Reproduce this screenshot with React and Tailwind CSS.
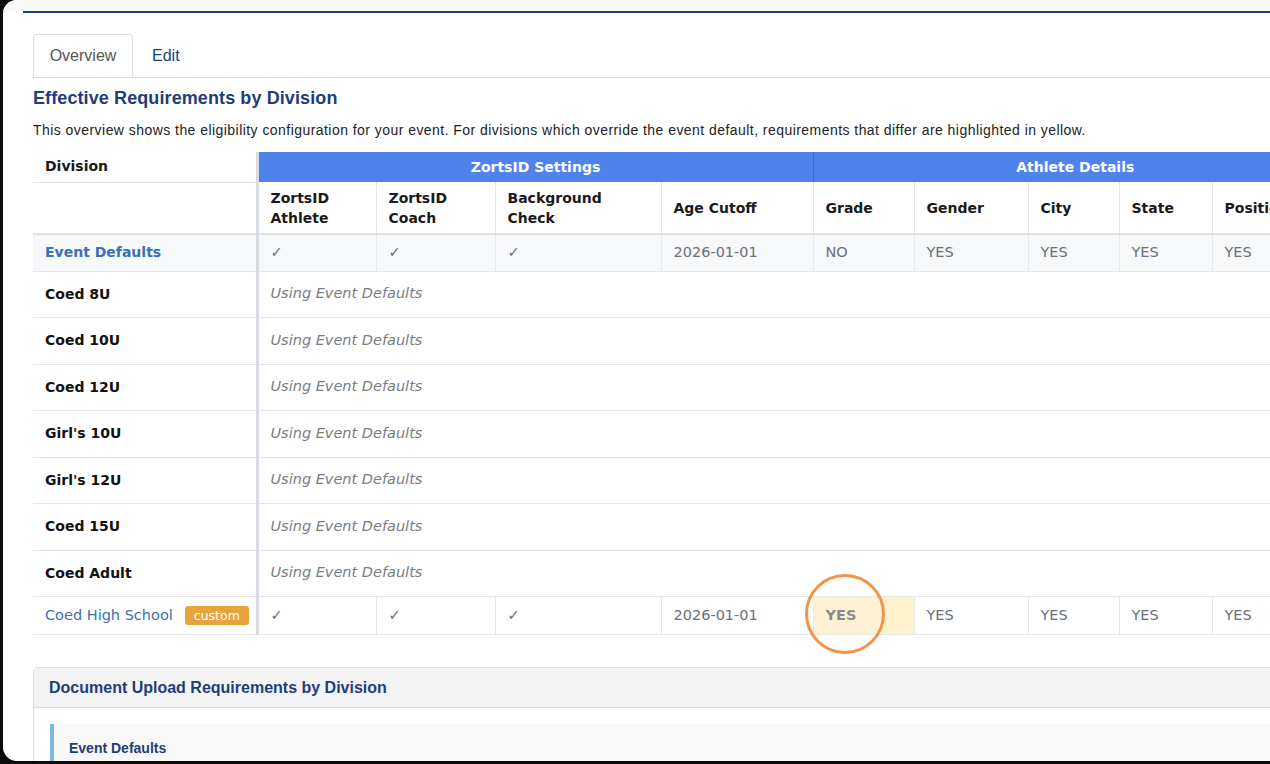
import React from 'react';

const subHeaders = [
  ['ZortsID', 'Athlete'],
  ['ZortsID', 'Coach'],
  ['Background', 'Check'],
  ['Age Cutoff'],
  ['Grade'],
  ['Gender'],
  ['City'],
  ['State'],
  ['Position'],
];

const defaultDivisions = ['Coed 8U', 'Coed 10U', 'Coed 12U', "Girl's 10U", "Girl's 12U", 'Coed 15U', 'Coed Adult'];

const values = ['✓', '✓', '✓', '2026-01-01', 'NO', 'YES', 'YES', 'YES', 'YES'];
const customValues = ['✓', '✓', '✓', '2026-01-01', 'YES', 'YES', 'YES', 'YES', 'YES'];

function ValueCell({ v, highlight, children }) {
  return (
    <td
      className={`relative border-r border-b border-[#e5e7eb] px-3 align-middle text-[14.5px] ${
        highlight ? 'bg-[#fcf2cc] font-bold text-[#6b7079]' : 'text-[#6b7079]'
      }`}
    >
      <span className="relative z-10">{v}</span>
      {children}
    </td>
  );
}

export default function App() {
  return (
    <div className="h-[764px] w-full overflow-hidden bg-[#0c0c0c] pl-[3px] pb-[3px]">
      <div className="relative h-full overflow-hidden rounded-l-[14px] bg-white" style={{ fontFamily: '"Liberation Sans", Arial, sans-serif' }}>
        <div className="h-[11px] bg-[#f9f9f9]" />
        <div className="ml-[20px] h-[2px] bg-[#1f3d7a]" />

        <div className="w-[1334px] pl-[30px]">
          {/* tabs */}
          <div className="mt-[21px] flex border-b border-[#dddddd]">
            <div className="-mb-px flex h-[43px] w-[100px] items-center justify-center rounded-t-[4px] border border-[#dddddd] border-b-white bg-white text-[16px] text-[#555555]">
              Overview
            </div>
            <div className="flex h-[43px] items-center px-[19px] text-[16px] text-[#1f3d7a]">Edit</div>
          </div>

          <h2 className="mt-[8px] text-[18px] leading-[24px] font-bold tracking-[0.1px] text-[#1f3d7a]">Effective Requirements by Division</h2>
          <p className="mt-[11px] text-[14px] leading-[18px] tracking-[0.45px] text-[#222222]">
            This overview shows the eligibility configuration for your event. For divisions which override the event default, requirements that differ are highlighted in yellow.
          </p>

          {/* requirements table */}
          <table
            className="mt-[13px] w-[1304px] table-fixed border-collapse text-[#1a1a1a]"
            style={{ fontFamily: '"DejaVu Sans", Verdana, sans-serif' }}
          >
            <colgroup>
              <col className="w-[224px]" />
              <col className="w-[119px]" />
              <col className="w-[119px]" />
              <col className="w-[166px]" />
              <col className="w-[152px]" />
              <col className="w-[101px]" />
              <col className="w-[114px]" />
              <col className="w-[91px]" />
              <col className="w-[93px]" />
              <col className="w-[125px]" />
            </colgroup>
            <thead>
              <tr className="h-[30px]">
                <th className="border-r-[3px] border-b border-r-[#d6dae1] border-b-[#e3e6ea] px-3 text-left text-[14px] font-bold">Division</th>
                <th colSpan={4} className="border-r border-r-[#3c6cd4] bg-[#4f82ea] text-center text-[14px] font-bold text-white">
                  ZortsID Settings
                </th>
                <th colSpan={5} className="bg-[#4f82ea] text-center text-[14px] font-bold text-white">
                  Athlete Details
                </th>
              </tr>
              <tr className="h-[52px]">
                <th className="border-r-[3px] border-b-2 border-r-[#d6dae1] border-b-[#dde1e6]" />
                {subHeaders.map((h, i) => (
                  <th key={i} className="border-r border-b-2 border-r-[#e5e7eb] border-b-[#dde1e6] px-3 text-left align-middle text-[14px] leading-5 font-bold">
                    {h.map((line, j) => (
                      <div key={j}>{line}</div>
                    ))}
                  </th>
                ))}
              </tr>
            </thead>
            <tbody>
              <tr className="h-[37px] bg-[#f7f8fa]">
                <td className="border-r-[3px] border-b border-r-[#d6dae1] border-b-[#e5e7eb] px-3 text-[14px] font-bold text-[#3b6fb6]">Event Defaults</td>
                {values.map((v, i) => (
                  <ValueCell key={i} v={v} />
                ))}
              </tr>
              {defaultDivisions.map((d) => (
                <tr key={d} className="h-[46.5px]">
                  <td className="border-r-[3px] border-b border-r-[#d6dae1] border-b-[#e5e7eb] px-3 text-[14px] font-bold text-[#111111]">{d}</td>
                  <td colSpan={9} className="border-b border-[#e5e7eb] px-3 text-[14.5px] text-[#7a7d83] italic">
                    Using Event Defaults
                  </td>
                </tr>
              ))}
              <tr className="h-[38px]">
                <td className="border-r-[3px] border-b border-r-[#d6dae1] border-b-[#e5e7eb] pr-0 pl-3 text-[14.5px] whitespace-nowrap text-[#3b6fb6]">
                  <div className="flex items-center gap-[12px]">
                    <span>Coed High School</span>
                    <span className="rounded-[3px] bg-[#e9a33c] px-[9px] text-[12.5px] leading-[19px] text-white">custom</span>
                  </div>
                </td>
                {customValues.map((v, i) => (
                  <ValueCell key={i} v={v} highlight={i === 4}>
                    {i === 4 && (
                      <div className="pointer-events-none absolute top-[-23px] left-[-9px] z-20 h-[80px] w-[80px] rounded-full border-[3px] border-[#ef9548] bg-[#fff6ef]/20" />
                    )}
                  </ValueCell>
                ))}
              </tr>
            </tbody>
          </table>

          {/* document upload */}
          <div className="mt-[32px] w-[1304px] rounded-t-[4px] border border-[#dddddd]">
            <div className="flex h-[40px] items-center border-b border-[#dddddd] bg-[#f3f3f3] px-[15px] text-[16px] font-bold text-[#1f3d7a]">
              Document Upload Requirements by Division
            </div>
            <div className="p-[16px]">
              <div className="h-[80px] border-l-4 border-[#7bbbe0] bg-[#f8f8f8] pt-[14px] pl-[15px] text-[14px] leading-5 font-bold text-[#1f3d7a]">
                Event Defaults
              </div>
            </div>
          </div>
        </div>
      </div>
    </div>
  );
}
